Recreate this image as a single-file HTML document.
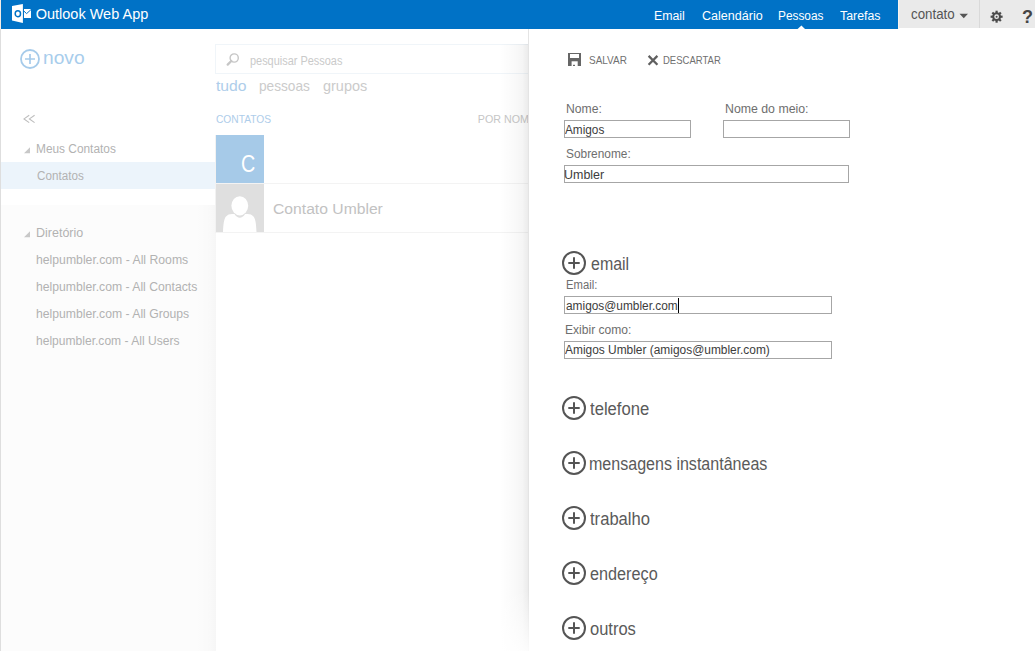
<!DOCTYPE html>
<html><head><meta charset="utf-8">
<style>
html,body{margin:0;padding:0;width:1035px;height:651px;overflow:hidden;background:#fff;}
body{position:relative;font-family:"Liberation Sans",sans-serif;}
.t{position:absolute;white-space:nowrap;font-family:"Liberation Sans",sans-serif;}
.a{position:absolute;}
.inp{position:absolute;box-sizing:border-box;border:1px solid #a6a6a6;background:#fff;}
</style></head><body>
<!-- header -->
<div class="a" style="left:0;top:0;width:1px;height:29px;background:#f3ece6"></div>
<div class="a" style="left:1px;top:0;width:897px;height:29px;background:#0072c6"></div>
<div class="a" style="left:898px;top:0;width:1px;height:29px;background:#f7f3ef"></div>
<div class="a" style="left:899px;top:0;width:136px;height:28px;background:#eaeaea"></div>
<div class="a" style="left:979px;top:0;width:1px;height:28px;background:#d9d9d9"></div>
<!-- logo -->
<svg class="a" style="left:12px;top:4px" width="20" height="20" viewBox="0 0 20 20">
 <path d="M0 2.1 L10.9 0 L10.9 18.9 L0 16.6 Z" fill="#fff"/>
 <ellipse cx="5.85" cy="9.65" rx="2.65" ry="3.0" fill="none" stroke="#0072c6" stroke-width="1.5"/>
 <rect x="12" y="5" width="7" height="9" fill="#fff"/>
 <path d="M12 7.2 L14.6 9.6 L19 5.6" fill="none" stroke="#0072c6" stroke-width="1"/>
</svg>
<!-- nav pointer -->
<svg class="a" style="left:797px;top:25px" width="9" height="4" viewBox="0 0 9 4"><path d="M0.6 4 L4.4 0.4 L8 4 Z" fill="#fff"/></svg>
<!-- caret -->
<svg class="a" style="left:959px;top:13px" width="10" height="6" viewBox="0 0 10 6"><path d="M0.5 0.8 L9 0.8 L4.75 5.2 Z" fill="#555"/></svg>
<!-- gear -->
<svg class="a" style="left:990px;top:10px" width="14" height="14" viewBox="0 0 14 14">
 <g fill="#4a4a4a" transform="translate(6.6 6.7)">
  <circle r="4.4"/>
  <rect x="-1.1" y="-6" width="2.2" height="12"/>
  <rect x="-1.1" y="-6" width="2.2" height="12" transform="rotate(45)"/>
  <rect x="-1.1" y="-6" width="2.2" height="12" transform="rotate(90)"/>
  <rect x="-1.1" y="-6" width="2.2" height="12" transform="rotate(135)"/>
 </g>
 <circle cx="6.6" cy="6.7" r="2.4" fill="#eaeaea"/>
 <circle cx="6.6" cy="6.7" r="1.0" fill="#4a4a4a"/>
</svg>
<div class="t" style="left:1022px;top:8px;font-size:18px;line-height:18px;font-weight:bold;color:#444">?</div>
<!-- left panel -->
<div class="a" style="left:0;top:29px;width:1px;height:622px;background:#dedede"></div>
<div class="a" style="left:1px;top:29px;width:215px;height:176px;background:#fff"></div>
<div class="a" style="left:1px;top:205px;width:215px;height:446px;background:#fcfcfc"></div>
<div class="a" style="left:196px;top:205px;width:20px;height:446px;background:linear-gradient(to right,rgba(0,0,0,0) 0%,rgba(0,0,0,0.01) 70%,rgba(0,0,0,0.025) 100%)"></div>
<svg class="a" style="left:20px;top:49px" width="20" height="20" viewBox="0 0 20 20">
 <circle cx="10" cy="10" r="9" fill="none" stroke="#a6cbea" stroke-width="1.8"/>
 <path d="M10 5 V15 M5 10 H15" stroke="#a6cbea" stroke-width="1.7"/>
</svg>
<svg class="a" style="left:23px;top:114px" width="13" height="10" viewBox="0 0 13 10">
 <path d="M6.2 1.2 L1.0 4.9 L6.2 8.6 M11.6 1.2 L6.4 4.9 L11.6 8.6" fill="none" stroke="#bdbdbd" stroke-width="1.1"/>
</svg>
<svg class="a" style="left:24px;top:147px" width="7" height="7" viewBox="0 0 7 7"><path d="M0 6.2 L6 0.2 L6 6.2 Z" fill="#c8c8c8"/></svg>
<div class="a" style="left:1px;top:162px;width:215px;height:27px;background:#ecf4fb"></div>
<svg class="a" style="left:24px;top:231px" width="7" height="7" viewBox="0 0 7 7"><path d="M0 6.2 L6 0.2 L6 6.2 Z" fill="#c8c8c8"/></svg>
<!-- middle -->
<div class="a" style="left:215px;top:44px;width:330px;height:30px;box-sizing:border-box;border:1px solid #f0f5f9;border-right:none"></div>
<svg class="a" style="left:225px;top:53px" width="15" height="14" viewBox="0 0 15 14">
 <circle cx="9.2" cy="5" r="4.1" fill="none" stroke="#c6c6c6" stroke-width="1.4"/>
 <path d="M6.3 8 L2.7 11.6" stroke="#c6c6c6" stroke-width="2.3" stroke-linecap="round"/>
</svg>
<div class="a" style="left:216px;top:135px;width:48px;height:48px;background:#a6cae8"></div>
<div class="a" style="left:216px;top:183px;width:330px;height:1px;background:#f3f3f3"></div>
<div class="a" style="left:216px;top:184px;width:48px;height:48px;background:#dfdfdf;overflow:hidden">
 <svg width="48" height="48" viewBox="0 0 48 48">
  <ellipse cx="23.8" cy="21.8" rx="8.4" ry="9.6" fill="#fff"/>
  <path d="M7 48 C7.3 41 7.8 35 10 32.5 C11.5 30.8 13.5 30 16 30 L18.5 30 C20 32.5 22 33.8 23.8 33.8 C25.6 33.8 27.6 32.5 29.1 30 L31.6 30 C34 30 36 30.8 37.5 32.5 C39.7 35 40.2 41 40.5 48 Z" fill="#fff"/>
 </svg>
</div>
<div class="a" style="left:216px;top:232px;width:330px;height:1px;background:#f3f3f3"></div>
<div class="a" style="left:215px;top:135px;width:1px;height:98px;background:#f2f2f2"></div>
<div class='t' style='left:35.70px;top:7px;font-size:14.5px;line-height:14.5px;color:#fff;'>Outlook Web App</div>
<div class='t' style='left:43.13px;top:49px;font-size:18px;line-height:18px;transform:scaleX(1.0658);transform-origin:0 0;color:#a8cdec;'>novo</div>
<div class='t' style='left:36.35px;top:143px;font-size:12.5px;line-height:12.5px;transform:scaleX(0.9494);transform-origin:0 0;color:#b2b2b2;'>Meus Contatos</div>
<div class='t' style='left:37.30px;top:170px;font-size:12.5px;line-height:12.5px;transform:scaleX(0.9340);transform-origin:0 0;color:#b2b2b2;'>Contatos</div>
<div class='t' style='left:36.00px;top:227px;font-size:12.5px;line-height:12.5px;color:#b2b2b2;'>Diretório</div>
<div class='t' style='left:36.22px;top:254px;font-size:12.5px;line-height:12.5px;transform:scaleX(0.9779);transform-origin:0 0;color:#b2b2b2;'>helpumbler.com - All Rooms</div>
<div class='t' style='left:36.22px;top:281px;font-size:12.5px;line-height:12.5px;transform:scaleX(0.9756);transform-origin:0 0;color:#b2b2b2;'>helpumbler.com - All Contacts</div>
<div class='t' style='left:36.22px;top:308px;font-size:12.5px;line-height:12.5px;transform:scaleX(0.9756);transform-origin:0 0;color:#b2b2b2;'>helpumbler.com - All Groups</div>
<div class='t' style='left:36.24px;top:335px;font-size:12.5px;line-height:12.5px;transform:scaleX(0.9649);transform-origin:0 0;color:#b2b2b2;'>helpumbler.com - All Users</div>
<div class='t' style='left:250.20px;top:55px;font-size:12px;line-height:12px;transform:scaleX(0.9109);transform-origin:0 0;color:#cacaca;'>pesquisar Pessoas</div>
<div class='t' style='left:215.70px;top:78px;font-size:15px;line-height:15px;transform:scaleX(1.0483);transform-origin:0 0;color:#aecdea;'>tudo</div>
<div class='t' style='left:258.69px;top:78px;font-size:15px;line-height:15px;transform:scaleX(0.9109);transform-origin:0 0;color:#cbcbcb;'>pessoas</div>
<div class='t' style='left:323.30px;top:78px;font-size:15px;line-height:15px;transform:scaleX(0.9652);transform-origin:0 0;color:#cbcbcb;'>grupos</div>
<div class='t' style='left:215.70px;top:114px;font-size:10.7px;line-height:10.7px;transform:scaleX(0.9552);transform-origin:0 0;color:#aecdea;'>CONTATOS</div>
<div class='t' style='left:477.80px;top:114px;font-size:10.7px;line-height:10.7px;color:#c6c6c6;'>POR NOME</div>
<div class='t' style='left:241.10px;top:153px;font-size:23.5px;line-height:23.5px;color:#fff;transform:scaleX(0.84);transform-origin:0 0;'>C</div>
<div class='t' style='left:273.39px;top:201px;font-size:15.5px;line-height:15.5px;transform:scaleX(1.0120);transform-origin:0 0;color:#c2c2c2;'>Contato Umbler</div>
<!-- right panel (covers middle) -->
<div class="a" style="left:500px;top:44px;width:28px;height:607px;background:linear-gradient(to right,rgba(0,0,0,0) 0%,rgba(0,0,0,0.018) 45%,rgba(0,0,0,0.04) 80%,rgba(0,0,0,0.08) 100%)"></div>
<div class="a" style="left:528px;top:29px;width:1px;height:622px;background:#e4e4e4"></div>
<div class="a" style="left:500px;top:590px;width:29px;height:61px;background:linear-gradient(to bottom,rgba(255,255,255,0) 0%,rgba(255,255,255,0.85) 100%)"></div>
<div class="a" style="left:529px;top:29px;width:506px;height:622px;background:#fff"></div>
<!-- save icon -->
<svg class="a" style="left:568px;top:53px" width="13" height="13" viewBox="0 0 13 13">
 <rect x="0" y="0" width="13" height="13" fill="#666"/>
 <rect x="2" y="1" width="9" height="4" fill="#fff"/>
 <rect x="3.6" y="8.3" width="6.1" height="4.7" fill="#fff"/>
 <rect x="5" y="11.8" width="2" height="1.2" fill="#666"/>
</svg>
<svg class="a" style="left:647px;top:55px" width="12" height="11" viewBox="0 0 12 11">
 <path d="M1.6 0.9 L10.4 9.7 M10.4 0.9 L1.6 9.7" stroke="#606060" stroke-width="2.3"/>
</svg>
<div class="inp" style="left:564px;top:120px;width:127px;height:18px"></div>
<div class="inp" style="left:723px;top:120px;width:127px;height:18px"></div>
<div class="inp" style="left:564px;top:165px;width:285px;height:18px"></div>
<div class="inp" style="left:564px;top:296px;width:268px;height:18px"></div>
<div class="inp" style="left:564px;top:341px;width:268px;height:18px"></div>
<div class="a" style="left:678px;top:298px;width:1px;height:15px;background:#000"></div>
<svg class="a" style="left:561px;top:250.2px" width="26" height="26" viewBox="0 0 26 26"><circle cx="13" cy="13" r="11" fill="none" stroke="#555" stroke-width="2"/><path d="M13 7.3 V18.7 M7.3 13 H18.7" stroke="#555" stroke-width="2"/></svg>
<svg class="a" style="left:561px;top:395.4px" width="26" height="26" viewBox="0 0 26 26"><circle cx="13" cy="13" r="11" fill="none" stroke="#555" stroke-width="2"/><path d="M13 7.3 V18.7 M7.3 13 H18.7" stroke="#555" stroke-width="2"/></svg>
<svg class="a" style="left:561px;top:450.2px" width="26" height="26" viewBox="0 0 26 26"><circle cx="13" cy="13" r="11" fill="none" stroke="#555" stroke-width="2"/><path d="M13 7.3 V18.7 M7.3 13 H18.7" stroke="#555" stroke-width="2"/></svg>
<svg class="a" style="left:561px;top:505.3px" width="26" height="26" viewBox="0 0 26 26"><circle cx="13" cy="13" r="11" fill="none" stroke="#555" stroke-width="2"/><path d="M13 7.3 V18.7 M7.3 13 H18.7" stroke="#555" stroke-width="2"/></svg>
<svg class="a" style="left:561px;top:560.3px" width="26" height="26" viewBox="0 0 26 26"><circle cx="13" cy="13" r="11" fill="none" stroke="#555" stroke-width="2"/><path d="M13 7.3 V18.7 M7.3 13 H18.7" stroke="#555" stroke-width="2"/></svg>
<svg class="a" style="left:561px;top:615.3px" width="26" height="26" viewBox="0 0 26 26"><circle cx="13" cy="13" r="11" fill="none" stroke="#555" stroke-width="2"/><path d="M13 7.3 V18.7 M7.3 13 H18.7" stroke="#555" stroke-width="2"/></svg>
<div class='t' style='left:654.21px;top:10px;font-size:12.5px;line-height:12.5px;transform:scaleX(0.9867);transform-origin:0 0;color:#fff;'>Email</div>
<div class='t' style='left:702.20px;top:10px;font-size:12.5px;line-height:12.5px;transform:scaleX(1.0050);transform-origin:0 0;color:#fff;'>Calendário</div>
<div class='t' style='left:778.45px;top:10px;font-size:12.5px;line-height:12.5px;transform:scaleX(0.9489);transform-origin:0 0;color:#fff;'>Pessoas</div>
<div class='t' style='left:840.20px;top:10px;font-size:12.5px;line-height:12.5px;transform:scaleX(0.9878);transform-origin:0 0;color:#fff;'>Tarefas</div>
<div class='t' style='left:911.20px;top:7px;font-size:14px;line-height:14px;transform:scaleX(0.9522);transform-origin:0 0;color:#555;'>contato</div>
<div class='t' style='left:589.30px;top:55px;font-size:10.5px;line-height:10.5px;transform:scaleX(0.9487);transform-origin:0 0;color:#707070;'>SALVAR</div>
<div class='t' style='left:662.79px;top:55px;font-size:10.5px;line-height:10.5px;transform:scaleX(0.9065);transform-origin:0 0;color:#707070;'>DESCARTAR</div>
<div class='t' style='left:565.59px;top:103px;font-size:12px;line-height:12px;transform:scaleX(1.0118);transform-origin:0 0;color:#6e6e6e;'>Nome:</div>
<div class='t' style='left:724.57px;top:103px;font-size:12px;line-height:12px;transform:scaleX(1.0262);transform-origin:0 0;color:#6e6e6e;'>Nome do meio:</div>
<div class='t' style='left:565.40px;top:124px;font-size:12.5px;line-height:12.5px;transform:scaleX(0.9429);transform-origin:0 0;color:#3c3c3c;'>Amigos</div>
<div class='t' style='left:565.61px;top:148px;font-size:12px;line-height:12px;transform:scaleX(0.9906);transform-origin:0 0;color:#6e6e6e;'>Sobrenome:</div>
<div class='t' style='left:564.40px;top:169px;font-size:12.5px;line-height:12.5px;transform:scaleX(0.9974);transform-origin:0 0;color:#3c3c3c;'>Umbler</div>
<div class='t' style='left:590.70px;top:256px;font-size:17.5px;line-height:17.5px;transform:scaleX(0.9122);transform-origin:0 0;color:#5a5a5a;'>email</div>
<div class='t' style='left:565.86px;top:279px;font-size:12px;line-height:12px;transform:scaleX(0.9375);transform-origin:0 0;color:#6e6e6e;'>Email:</div>
<div class='t' style='left:565.70px;top:300px;font-size:12.5px;line-height:12.5px;transform:scaleX(0.9504);transform-origin:0 0;color:#3c3c3c;'>amigos@umbler.com</div>
<div class='t' style='left:565.49px;top:324px;font-size:12px;line-height:12px;transform:scaleX(1.0063);transform-origin:0 0;color:#6e6e6e;'>Exibir como:</div>
<div class='t' style='left:565.40px;top:344px;font-size:12.5px;line-height:12.5px;transform:scaleX(0.9535);transform-origin:0 0;color:#3c3c3c;'>Amigos Umbler (amigos@umbler.com)</div>
<div class='t' style='left:590.20px;top:401px;font-size:17.5px;line-height:17.5px;transform:scaleX(0.9516);transform-origin:0 0;color:#5a5a5a;'>telefone</div>
<div class='t' style='left:589.28px;top:456px;font-size:17.5px;line-height:17.5px;transform:scaleX(0.9166);transform-origin:0 0;color:#5a5a5a;'>mensagens instantâneas</div>
<div class='t' style='left:590.20px;top:511px;font-size:17.5px;line-height:17.5px;transform:scaleX(0.9492);transform-origin:0 0;color:#5a5a5a;'>trabalho</div>
<div class='t' style='left:590.20px;top:566px;font-size:17.5px;line-height:17.5px;transform:scaleX(0.9274);transform-origin:0 0;color:#5a5a5a;'>endereço</div>
<div class='t' style='left:590.20px;top:621px;font-size:17.5px;line-height:17.5px;transform:scaleX(0.9429);transform-origin:0 0;color:#5a5a5a;'>outros</div>
</body></html>
